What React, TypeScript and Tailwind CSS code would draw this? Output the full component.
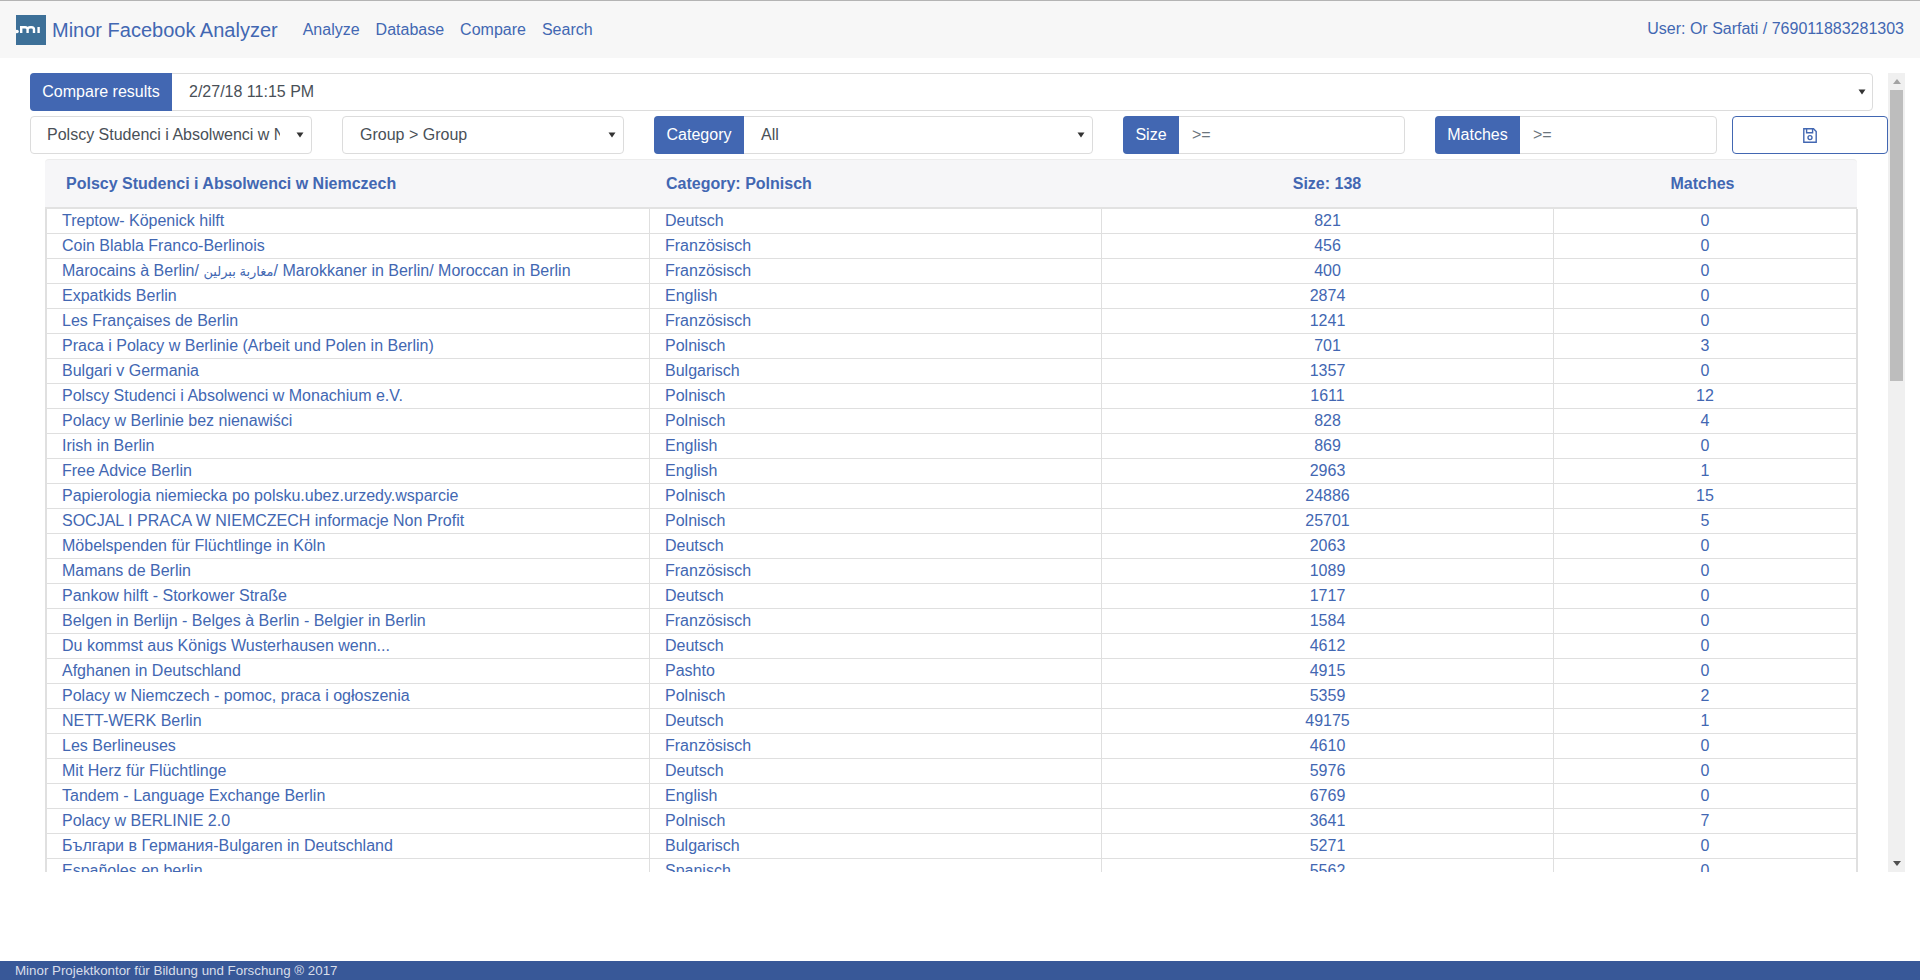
const rows: [React.ReactNode, string, string, string][] = [
  ["Treptow- Köpenick hilft", "Deutsch", "821", "0"],
  ["Coin Blabla Franco-Berlinois", "Französisch", "456", "0"],
  [<>Marocains à Berlin/ <span className="text-[13px]">مغاربة ببرلين</span>/ Marokkaner in Berlin/ Moroccan in Berlin</>, "Französisch", "400", "0"],
  ["Expatkids Berlin", "English", "2874", "0"],
  ["Les Françaises de Berlin", "Französisch", "1241", "0"],
  ["Praca i Polacy w Berlinie (Arbeit und Polen in Berlin)", "Polnisch", "701", "3"],
  ["Bulgari v Germania", "Bulgarisch", "1357", "0"],
  ["Polscy Studenci i Absolwenci w Monachium e.V.", "Polnisch", "1611", "12"],
  ["Polacy w Berlinie bez nienawiści", "Polnisch", "828", "4"],
  ["Irish in Berlin", "English", "869", "0"],
  ["Free Advice Berlin", "English", "2963", "1"],
  ["Papierologia niemiecka po polsku.ubez.urzedy.wsparcie", "Polnisch", "24886", "15"],
  ["SOCJAL I PRACA W NIEMCZECH informacje Non Profit", "Polnisch", "25701", "5"],
  ["Möbelspenden für Flüchtlinge in Köln", "Deutsch", "2063", "0"],
  ["Mamans de Berlin", "Französisch", "1089", "0"],
  ["Pankow hilft - Storkower Straße", "Deutsch", "1717", "0"],
  ["Belgen in Berlijn - Belges à Berlin - Belgier in Berlin", "Französisch", "1584", "0"],
  ["Du kommst aus Königs Wusterhausen wenn...", "Deutsch", "4612", "0"],
  ["Afghanen in Deutschland", "Pashto", "4915", "0"],
  ["Polacy w Niemczech - pomoc, praca i ogłoszenia", "Polnisch", "5359", "2"],
  ["NETT-WERK Berlin", "Deutsch", "49175", "1"],
  ["Les Berlineuses", "Französisch", "4610", "0"],
  ["Mit Herz für Flüchtlinge", "Deutsch", "5976", "0"],
  ["Tandem - Language Exchange Berlin", "English", "6769", "0"],
  ["Polacy w BERLINIE 2.0", "Polnisch", "3641", "7"],
  ["Българи в Германия-Bulgaren in Deutschland", "Bulgarisch", "5271", "0"],
  ["Españoles en berlin", "Spanisch", "5562", "0"],
];

function Caret() {
  return (
    <svg width="8" height="6" viewBox="0 0 8 6" className="shrink-0">
      <path d="M0.5 0.5H7.5L4 5.5Z" fill="#333" />
    </svg>
  );
}

export default function App() {
  return (
    <div className="h-[980px] w-[1920px] flex flex-col bg-white text-[16px] overflow-hidden font-['Liberation_Sans','DejaVu_Sans',sans-serif]">
      <header className="h-[58px] shrink-0 bg-[#f7f7f7] border-t border-t-[#b4b4b4] flex items-center pl-4 pr-[16px] text-[#4267b2]">
        <svg width="30" height="30" viewBox="0 0 30 30" className="shrink-0">
          <rect width="30" height="30" fill="#3d7098" />
          <circle cx="1" cy="16.5" r="1.8" fill="#fff" />
          <path d="M5.2 18V12.2H9Q11.6 12.2 11.6 14.5V18M11.6 14.5Q11.6 12.2 14.5 12.2H15.5Q18 12.2 18 14.5V18M22.6 12V18" stroke="#fff" strokeWidth="2.4" fill="none" />
        </svg>
        <span className="ml-[6px] text-[20px] leading-[30px]">Minor Facebook Analyzer</span>
        <nav className="ml-[25px] flex gap-4">
          <span>Analyze</span>
          <span>Database</span>
          <span>Compare</span>
          <span>Search</span>
        </nav>
        <span className="ml-auto mb-[2px]">User: Or Sarfati / 769011883281303</span>
      </header>

      <main className="flex-1 flex pl-[30px] pt-[15px] items-start">
        <div className="w-[1858px] h-[799px] overflow-hidden shrink-0">
          <div className="h-[38px] w-[1843px] flex border border-[#dcdcdc] rounded-[4px] box-border">
            <div className="w-[142px] -m-px h-[38px] shrink-0 bg-[#4267b2] text-white rounded-l-[4px] flex items-center justify-center">Compare results</div>
            <div className="flex-1 pl-[18px] flex items-center text-[#495057]">2/27/18 11:15 PM</div>
            <div className="flex items-center pr-[6px]"><Caret /></div>
          </div>

          <div className="mt-[5px] h-[38px] flex">
            <div className="w-[282px] border border-[#dcdcdc] rounded-[4px] flex items-center pl-[16px] pr-[7px] text-[#495057]">
              <span className="w-[233px] overflow-hidden whitespace-nowrap">Polscy Studenci i Absolwenci w Niemczech</span>
              <span className="ml-auto"><Caret /></span>
            </div>
            <div className="ml-[30px] w-[282px] border border-[#dcdcdc] rounded-[4px] flex items-center pl-[17px] pr-[7px] text-[#495057]">
              <span>Group &gt; Group</span>
              <span className="ml-auto"><Caret /></span>
            </div>
            <div className="ml-[30px] w-[439px] border border-[#dcdcdc] rounded-[4px] flex items-center pr-[7px] text-[#495057]">
              <div className="w-[90px] -ml-px h-[38px] shrink-0 bg-[#4267b2] text-white rounded-l-[4px] flex items-center justify-center">Category</div>
              <span className="ml-[17px]">All</span>
              <span className="ml-auto"><Caret /></span>
            </div>
            <div className="ml-[30px] w-[282px] border border-[#dcdcdc] rounded-[4px] flex items-center text-[#6c757d]">
              <div className="w-[56px] -ml-px h-[38px] shrink-0 bg-[#4267b2] text-white rounded-l-[4px] flex items-center justify-center">Size</div>
              <span className="ml-[13px]">&gt;=</span>
            </div>
            <div className="ml-[30px] w-[282px] border border-[#dcdcdc] rounded-[4px] flex items-center text-[#6c757d]">
              <div className="w-[85px] -ml-px h-[38px] shrink-0 bg-[#4267b2] text-white rounded-l-[4px] flex items-center justify-center">Matches</div>
              <span className="ml-[13px]">&gt;=</span>
            </div>
            <div className="ml-[15px] w-[156px] border border-[#4267b2] rounded-[4px] flex items-center justify-center">
              <svg width="14" height="15" viewBox="0 0 14 15" fill="none" stroke="#4267b2" strokeWidth="1.4">
                <path d="M0.8 0.8H10.5L13.2 3.5V14.2H0.8Z" />
                <path d="M3.6 0.8V4.8H9.6V0.8" />
                <circle cx="7" cy="9.6" r="2" />
              </svg>
            </div>
          </div>

          <div className="ml-[15px] w-[1813px] mt-[5px] text-[#4267b2]">
            <div className="w-[1812px] h-[50px] bg-[#f6f6f8] rounded-t-[4px] border-t border-t-[#ececec] border-b-2 border-b-[#e2e2e2] flex items-center font-bold box-border">
              <div className="w-[609px] pl-[21px]">Polscy Studenci i Absolwenci w Niemczech</div>
              <div className="w-[452px] pl-[12px]">Category: Polnisch</div>
              <div className="w-[442px] text-center">Size: 138</div>
              <div className="flex-1 text-center">Matches</div>
            </div>
            <div className="border-x-2 border-[#e0e0e0]">
              {rows.map((r, i) => (
                <div key={i} className="h-[25px] flex border-b border-[#dfdfdf] leading-[24px] whitespace-nowrap">
                  <div className="w-[603px] pl-[15px] border-r border-[#dfdfdf] overflow-hidden">{r[0]}</div>
                  <div className="w-[452px] pl-[15px] border-r border-[#dfdfdf]">{r[1]}</div>
                  <div className="w-[452px] text-center border-r border-[#dfdfdf]">{r[2]}</div>
                  <div className="flex-1 text-center">{r[3]}</div>
                </div>
              ))}
            </div>
          </div>
        </div>

        <div className="w-[17px] h-[799px] bg-[#f0f0f0] shrink-0 flex flex-col items-center">
          <div className="h-[17px] shrink-0 flex items-center justify-center">
            <svg width="8" height="5" viewBox="0 0 8 5"><path d="M0 5H8L4 0Z" fill="#a3a3a3" /></svg>
          </div>
          <div className="w-[13px] h-[291px] bg-[#bdbdbd]" />
          <div className="mt-auto h-[17px] shrink-0 flex items-center justify-center">
            <svg width="8" height="5" viewBox="0 0 8 5"><path d="M0 0H8L4 5Z" fill="#505050" /></svg>
          </div>
        </div>
      </main>

      <footer className="h-[19px] shrink-0 bg-[#385898] text-[#d8deea] text-[13.33px] leading-[19px] pl-[15px]">
        Minor Projektkontor für Bildung und Forschung ® 2017
      </footer>
    </div>
  );
}
